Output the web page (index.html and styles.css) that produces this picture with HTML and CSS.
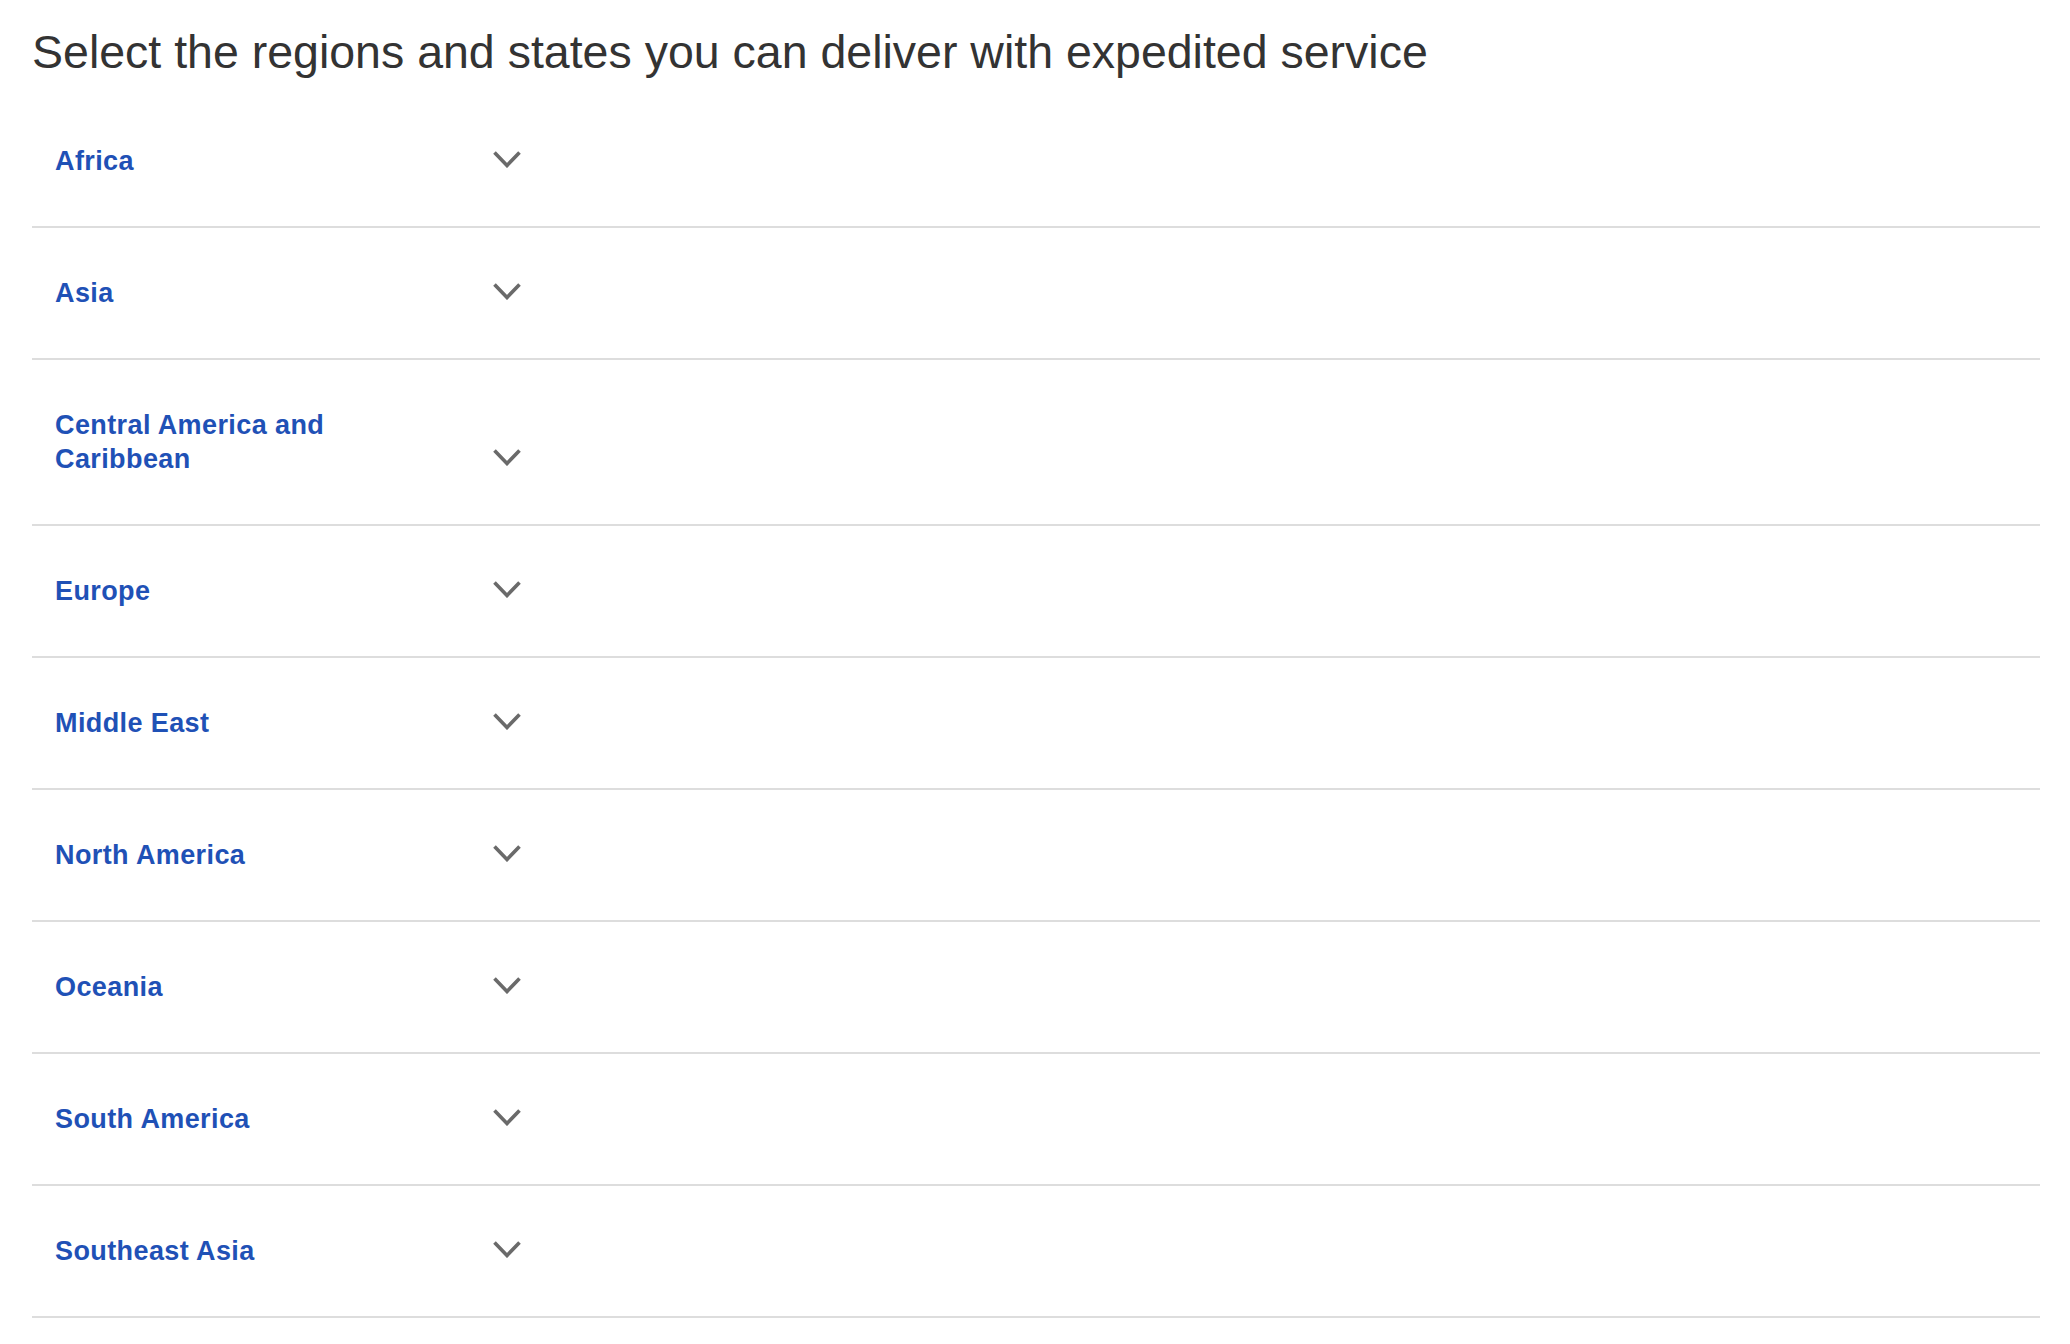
FILE: index.html
```html
<!DOCTYPE html>
<html lang="en">
<head>
<meta charset="utf-8">
<title>Expedited regions</title>
<link rel="stylesheet" href="styles.css">
</head>
<body>
<h1 class="title">Select the regions and states you can deliver with expedited service</h1>
<ul class="regions">
  <li class="region"><span class="label">Africa</span><span class="chev"><svg width="28" height="17" viewBox="0 0 28 17"><polyline points="1.5,1.5 14,14.5 26.5,1.5"/></svg></span></li>
  <li class="region"><span class="label">Asia</span><span class="chev"><svg width="28" height="17" viewBox="0 0 28 17"><polyline points="1.5,1.5 14,14.5 26.5,1.5"/></svg></span></li>
  <li class="region"><span class="label">Central America and Caribbean</span><span class="chev"><svg width="28" height="17" viewBox="0 0 28 17"><polyline points="1.5,1.5 14,14.5 26.5,1.5"/></svg></span></li>
  <li class="region"><span class="label">Europe</span><span class="chev"><svg width="28" height="17" viewBox="0 0 28 17"><polyline points="1.5,1.5 14,14.5 26.5,1.5"/></svg></span></li>
  <li class="region"><span class="label">Middle East</span><span class="chev"><svg width="28" height="17" viewBox="0 0 28 17"><polyline points="1.5,1.5 14,14.5 26.5,1.5"/></svg></span></li>
  <li class="region"><span class="label">North America</span><span class="chev"><svg width="28" height="17" viewBox="0 0 28 17"><polyline points="1.5,1.5 14,14.5 26.5,1.5"/></svg></span></li>
  <li class="region"><span class="label">Oceania</span><span class="chev"><svg width="28" height="17" viewBox="0 0 28 17"><polyline points="1.5,1.5 14,14.5 26.5,1.5"/></svg></span></li>
  <li class="region"><span class="label">South America</span><span class="chev"><svg width="28" height="17" viewBox="0 0 28 17"><polyline points="1.5,1.5 14,14.5 26.5,1.5"/></svg></span></li>
  <li class="region"><span class="label">Southeast Asia</span><span class="chev"><svg width="28" height="17" viewBox="0 0 28 17"><polyline points="1.5,1.5 14,14.5 26.5,1.5"/></svg></span></li>
</ul>
</body>
</html>
```

FILE: styles.css
```css
html, body {
  margin: 0;
  background: #ffffff;
}

body {
  padding: 24px 30px 0 32px;
  font-family: "Liberation Sans", Arial, Helvetica, sans-serif;
}

.title {
  margin: 0 0 16px 0;
  font-size: 46.5px;
  line-height: 56px;
  font-weight: 400;
  color: #333333;
}

.regions {
  list-style: none;
  margin: 0;
  padding: 0;
}

.region {
  display: flex;
  align-items: flex-end;
  padding: 48px 0 48px 23px;
  border-bottom: 2px solid #dddddd;
}

.label {
  width: 330px;
  font-size: 27px;
  line-height: 34px;
  letter-spacing: 0.4px;
  font-weight: 700;
  color: #1f51b6;
}

.chev {
  display: flex;
  align-items: center;
  height: 34px;
  margin-left: 108px;
  padding-bottom: 4px;
  box-sizing: border-box;
}

.chev svg {
  display: block;
}

.chev polyline {
  fill: none;
  stroke: #6a6a6a;
  stroke-width: 3.6;
  stroke-linecap: butt;
  stroke-linejoin: miter;
}
```
